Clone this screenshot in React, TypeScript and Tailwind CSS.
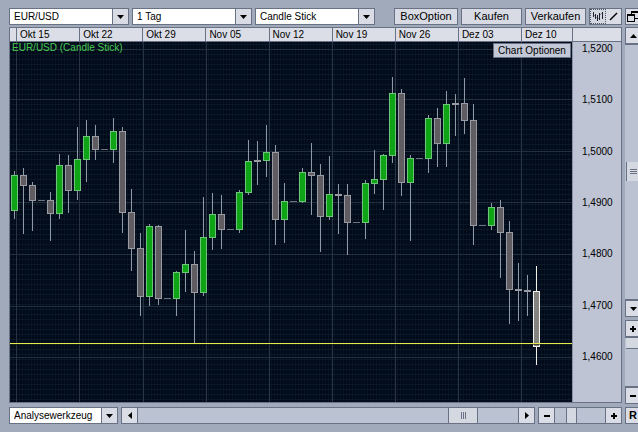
import type { ReactNode } from "react";

type Kind = "up" | "down" | "flat" | "live";
type Candle = [x: number, kind: Kind, high: number, top: number, bottom: number, low: number];

const LEFT = 10;
const TOP = 42;

const candles: Candle[] = [
  [14, "up", 171, 175, 210, 218],
  [23, "down", 168, 175, 185, 233],
  [32, "down", 182, 185, 200, 230],
  [41, "flat", 200, 200, 200, 200],
  [50, "down", 192, 200, 213, 240],
  [59, "up", 154, 165, 213, 218],
  [68, "down", 155, 165, 190, 212],
  [77, "up", 127, 159, 190, 199],
  [86, "up", 120, 136, 159, 181],
  [95, "down", 125, 136, 149, 159],
  [104, "flat", 149, 149, 149, 149],
  [113, "up", 118, 131, 149, 162],
  [122, "down", 127, 131, 212, 232],
  [131, "down", 189, 212, 248, 270],
  [140, "down", 233, 248, 296, 315],
  [149, "up", 224, 226, 296, 305],
  [158, "down", 225, 226, 298, 304],
  [167, "flat", 298, 298, 298, 298],
  [176, "up", 271, 272, 298, 315],
  [185, "up", 230, 264, 272, 291],
  [194, "down", 251, 264, 292, 343],
  [203, "up", 197, 237, 292, 295],
  [212, "up", 193, 214, 237, 249],
  [221, "down", 195, 214, 229, 248],
  [230, "flat", 229, 229, 229, 229],
  [239, "up", 190, 192, 229, 232],
  [248, "up", 140, 161, 192, 194],
  [257, "down", 141, 160, 161, 184],
  [266, "up", 125, 152, 160, 176],
  [275, "down", 145, 152, 219, 244],
  [284, "up", 183, 201, 219, 242],
  [293, "flat", 201, 201, 201, 201],
  [302, "up", 168, 172, 201, 202],
  [311, "down", 143, 172, 175, 214],
  [320, "down", 164, 175, 216, 251],
  [329, "up", 156, 194, 216, 219],
  [338, "down", 184, 194, 195, 233],
  [347, "down", 184, 195, 222, 254],
  [356, "flat", 222, 222, 222, 222],
  [365, "up", 180, 183, 222, 238],
  [374, "up", 150, 179, 183, 193],
  [383, "up", 154, 155, 179, 209],
  [392, "up", 77, 93, 155, 162],
  [401, "down", 89, 93, 182, 195],
  [410, "up", 155, 158, 182, 240],
  [419, "flat", 158, 158, 158, 158],
  [428, "up", 115, 118, 158, 172],
  [437, "down", 108, 118, 143, 166],
  [446, "up", 91, 104, 143, 166],
  [455, "down", 94, 103, 104, 135],
  [464, "down", 78, 103, 120, 133],
  [473, "down", 104, 120, 225, 244],
  [482, "flat", 225, 225, 225, 225],
  [491, "up", 203, 207, 225, 229],
  [500, "down", 200, 207, 232, 277],
  [509, "down", 221, 232, 289, 323],
  [518, "down", 263, 289, 290, 320],
  [527, "down", 275, 290, 291, 315],
  [536, "live", 266, 291, 346, 364],
];

const fills: Record<Kind, string> = { up: "#0fa416", down: "#5f5d62", flat: "#5f5d62", live: "#83837f" };
const edges: Record<Kind, string> = { up: "#6fc47c", down: "#9a9aa2", flat: "#6b737d", live: "#f2f2ea" };
const wicks: Record<Kind, string> = { up: "#8f99a6", down: "#8f99a6", flat: "#6b737d", live: "#f2f2ea" };

const weeks = ["Okt 15", "Okt 22", "Okt 29", "Nov 05", "Nov 12", "Nov 19", "Nov 26", "Dez 03"];
const prices = ["1,5200", "1,5100", "1,5000", "1,4900", "1,4800", "1,4700", "1,4600"];
const weekLines = [16, 79, 143, 206, 269, 332, 395, 458, 521];
const priceLines = [49, 99, 151, 202, 254, 306, 357];

function CandleShape({ candle }: { candle: Candle }) {
  const [cx, kind, high, top, bottom, low] = candle;
  const x = cx - LEFT;
  if (kind === "flat") return <rect x={x - 3} y={top - TOP} width={7} height={1} fill={edges.flat} />;
  return (
    <g>
      <rect x={x} y={high - TOP} width={1} height={low - high + 1} fill={wicks[kind]} />
      <rect x={x - 3} y={top - TOP} width={7} height={bottom - top + 1} fill={edges[kind]} />
      {bottom - top > 1 && (
        <rect x={x - 2} y={top - TOP + 1} width={5} height={bottom - top - 1} fill={fills[kind]} />
      )}
    </g>
  );
}

function Plot() {
  return (
    <svg
      viewBox="0 0 562 360"
      preserveAspectRatio="xMaxYMid slice"
      shapeRendering="crispEdges"
      className="block h-[360px] w-full bg-[#020a1a]"
      role="img"
      aria-label="EUR/USD Candle Stick"
    >
      <defs>
        <pattern id="fine" width="3" height="5" patternUnits="userSpaceOnUse">
          <rect width="1" height="5" fill="#061323" />
          <rect y="2" width="3" height="1" fill="#0a1828" />
        </pattern>
      </defs>
      <rect width="562" height="360" fill="url(#fine)" />
      {weekLines.map((x) => (
        <rect key={x} x={x - LEFT} y={0} width={1} height={360} fill="#283443" />
      ))}
      {priceLines.map((y) => (
        <rect key={y} x={0} y={y - TOP} width={562} height={1} fill="#222f3d" />
      ))}
      {candles.map((c) => (
        <CandleShape key={c[0]} candle={c} />
      ))}
      <rect x={0} y={302} width={562} height={1} fill="#1a1f0a" fillOpacity={0.6} />
      <rect x={0} y={301} width={562} height={1} fill="#e4ea52" />
    </svg>
  );
}

function Picker({ label, value, className }: { label: string; value: string; className: string }) {
  return (
    <div className={`relative h-[17px] border border-[#697184] bg-white ${className}`}>
      <select
        aria-label={label}
        className="block h-full w-full appearance-none bg-transparent pr-4 pl-1 text-[10px] leading-[15px] text-black outline-none"
      >
        <option>{value}</option>
      </select>
      <span className="pointer-events-none absolute inset-y-0 right-0 flex w-4 items-center justify-center border-l border-[#697184] bg-[#d9dce4]">
        <Glyph d="M0 0h7L3.5 4z" w={7} h={4} />
      </span>
    </div>
  );
}

function Glyph({ d, w, h }: { d: string; w: number; h: number }) {
  return (
    <svg width={w} height={h} viewBox={`0 0 ${w} ${h}`} fill="#000" aria-hidden="true">
      <path d={d} />
    </svg>
  );
}

const PLUS = "M2 0h2v2h2v2H4v2H2V4H0V2h2z";
const MINUS = "M0 2h6v2H0z";

function Key({ label, className = "w-[17px]", children }: { label: string; className?: string; children: ReactNode }) {
  return (
    <button
      aria-label={label}
      className={`flex h-[17px] shrink-0 items-center justify-center border border-[#697184] bg-[#dadde5] ${className}`}
    >
      {children}
    </button>
  );
}

function TextButton({ className, children }: { className: string; children: ReactNode }) {
  return (
    <button
      className={`flex h-[17px] items-center justify-center border border-[#697184] bg-[#d8dbe4] text-[11px] leading-[15px] ${className}`}
    >
      {children}
    </button>
  );
}

export default function App() {
  return (
    <div className="flex min-h-screen w-full gap-[3px] overflow-hidden bg-[#a0aabb] py-2 pl-[9px] font-['Liberation_Sans',Arial,sans-serif] text-[10px] text-black">
      <main className="flex min-w-0 flex-1 flex-col">
        <div className="mb-[2px] flex items-center gap-[3px]">
          <Picker label="Symbol" value="EUR/USD" className="w-[120px]" />
          <Picker label="Intervall" value="1 Tag" className="w-[120px]" />
          <Picker label="Darstellung" value="Candle Stick" className="w-[120px]" />
          <TextButton className="ml-auto w-16">BoxOption</TextButton>
          <TextButton className="w-[61px]">Kaufen</TextButton>
          <TextButton className="w-[61px]">Verkaufen</TextButton>
          <div className="flex h-[17px] w-[33px] border border-[#697184] bg-[#dadde5]">
            <button
              aria-label="Balken"
              className="flex w-4 items-center justify-center border border-dotted border-[#4d5568] bg-[#d3d7e0]"
            >
              <svg
                width="10"
                height="9"
                viewBox="0 0 10 9"
                shapeRendering="crispEdges"
                className="shrink-0"
                aria-hidden="true"
              >
                <path d="M0 0h1v5H0zM2 2h1v5H2zM4 3h1v6H4zM6 1h1v7H6zM9 0h1v7H9z" fill="#20242e" />
                <path d="M1 3h1v1H1zM3 5h1v1H3zM5 6h1v1H5zM7 2h1v1H7zM8 1h1v1H8z" fill="#8a90a0" />
              </svg>
            </button>
            <button aria-label="Linie" className="flex flex-1 items-center justify-center">
              <svg width="9" height="9" viewBox="0 0 9 9" aria-hidden="true">
                <path d="M1 8L8 1" stroke="#000" strokeWidth="1.5" />
              </svg>
            </button>
          </div>
        </div>

        <section className="mb-1 border border-[#697184] bg-[#bec4d3]">
          <div className="grid h-[14px] grid-cols-[7px_repeat(8,minmax(0,1fr))_51px_48px] border-b border-[#697184] bg-[#dcdee7] leading-[14px]">
            <span className="border-r border-[#697184]" />
            {weeks.map((w) => (
              <span key={w} className="border-r border-[#697184] pl-[3px]">
                {w}
              </span>
            ))}
            <span className="border-r border-[#697184] pl-[3px]">Dez 10</span>
            <span />
          </div>
          <div className="flex">
            <div className="relative min-w-0 flex-1">
              <Plot />
              <span className="absolute top-0 left-[2px] leading-[12px] text-[#45c94f]">EUR/USD (Candle Stick)</span>
              <button className="absolute top-px right-px h-[15px] w-[78px] border border-[#697184] bg-[#c3c8d6] text-[10px] leading-[13px]">
                Chart Optionen
              </button>
            </div>
            <div className="flex w-[49px] flex-col justify-between border-l border-[#8a91a2] pb-[38px] pl-[9px] leading-[14px]">
              {prices.map((p) => (
                <span key={p}>{p}</span>
              ))}
            </div>
          </div>
        </section>

        <div className="flex items-center gap-[3px]">
          <Picker label="Werkzeug" value="Analysewerkzeug" className="w-[109px]" />
          <div className="flex h-[17px] min-w-0 flex-1">
            <Key label="Zurück">
              <Glyph d="M4 0v7L0 3.5z" w={4} h={7} />
            </Key>
            <input
              type="range"
              aria-label="Zeitraum"
              min={0}
              max={1000}
              defaultValue={886}
              className="m-0 block h-[17px] min-w-0 flex-1 appearance-none border-y border-[#697184] bg-[#bbc2d1] [&::-webkit-slider-thumb]:h-[15px] [&::-webkit-slider-thumb]:w-[30px] [&::-webkit-slider-thumb]:appearance-none [&::-webkit-slider-thumb]:border-x [&::-webkit-slider-thumb]:border-[#697184] [&::-webkit-slider-thumb]:bg-[#d3d8e1] [&::-webkit-slider-thumb]:bg-[linear-gradient(90deg,#697184_1px,transparent_1px,transparent_2px,#697184_2px,#697184_3px,transparent_3px,transparent_4px,#697184_4px)] [&::-webkit-slider-thumb]:bg-[length:5px_7px] [&::-webkit-slider-thumb]:bg-center [&::-webkit-slider-thumb]:bg-no-repeat"
            />
            <Key label="Vor">
              <Glyph d="M0 0v7l4-3.5z" w={4} h={7} />
            </Key>
          </div>
          <div className="flex h-[17px] w-[84px]">
            <Key label="Zeitachse verkleinern">
              <Glyph d={MINUS} w={6} h={6} />
            </Key>
            <input
              type="range"
              aria-label="Zoom der Zeitachse"
              min={0}
              max={100}
              defaultValue={28}
              className="m-0 block h-[17px] min-w-0 flex-1 appearance-none border-y border-[#697184] bg-[#bbc2d1] [&::-webkit-slider-thumb]:h-[15px] [&::-webkit-slider-thumb]:w-[11px] [&::-webkit-slider-thumb]:appearance-none [&::-webkit-slider-thumb]:border-x [&::-webkit-slider-thumb]:border-[#697184] [&::-webkit-slider-thumb]:bg-[#d3d8e1]"
            />
            <Key label="Zeitachse vergrößern">
              <Glyph d={PLUS} w={6} h={6} />
            </Key>
          </div>
        </div>
      </main>

      <aside className="-mr-[3px] flex w-4 shrink-0 flex-col">
        <div className="mb-[2px]">
          <Key label="Neues Fenster" className="w-4">
            <svg width="12" height="11" viewBox="0 0 12 11" shapeRendering="crispEdges" className="shrink-0" aria-hidden="true">
              <path d="M4 0h8v8H4z" fill="#000" />
              <path d="M5 2h6v5H5z" fill="#dadde5" />
              <path d="M0 3h8v8H0z" fill="#000" />
              <path d="M1 5h6v5H1z" fill="#dadde5" />
            </svg>
          </Key>
        </div>
        <div className="mb-[3px] flex flex-1 flex-col">
          <Key label="Nach oben" className="w-4">
            <Glyph d="M0 4h7L3.5 0z" w={7} h={4} />
          </Key>
          <input
            type="range"
            aria-label="Preisbereich"
            min={0}
            max={1000}
            defaultValue={498}
            className="m-0 block min-h-0 w-4 flex-1 appearance-none border-x border-[#697184] bg-[#bbc2d1] [writing-mode:vertical-lr] [&::-webkit-slider-thumb]:h-[19px] [&::-webkit-slider-thumb]:w-[14px] [&::-webkit-slider-thumb]:appearance-none [&::-webkit-slider-thumb]:border-y [&::-webkit-slider-thumb]:border-[#697184] [&::-webkit-slider-thumb]:bg-[#d3d8e1] [&::-webkit-slider-thumb]:bg-[linear-gradient(#697184_1px,transparent_1px,transparent_2px,#697184_2px,#697184_3px,transparent_3px,transparent_4px,#697184_4px)] [&::-webkit-slider-thumb]:bg-[length:7px_5px] [&::-webkit-slider-thumb]:bg-center [&::-webkit-slider-thumb]:bg-no-repeat"
          />
          <Key label="Nach unten" className="w-4">
            <Glyph d="M0 0h7L3.5 4z" w={7} h={4} />
          </Key>
        </div>
        <div className="mb-[3px] flex h-[84px] flex-col">
          <Key label="Preisachse vergrößern" className="w-4">
            <Glyph d={PLUS} w={6} h={6} />
          </Key>
          <input
            type="range"
            aria-label="Zoom der Preisachse"
            min={0}
            max={100}
            defaultValue={0}
            className="m-0 block min-h-0 w-4 flex-1 appearance-none border-x border-[#697184] bg-[#bbc2d1] [writing-mode:vertical-lr] [&::-webkit-slider-thumb]:h-[11px] [&::-webkit-slider-thumb]:w-[14px] [&::-webkit-slider-thumb]:appearance-none [&::-webkit-slider-thumb]:border-b [&::-webkit-slider-thumb]:border-[#697184] [&::-webkit-slider-thumb]:bg-[#d3d8e1]"
          />
          <Key label="Preisachse verkleinern" className="w-4">
            <Glyph d={MINUS} w={6} h={6} />
          </Key>
        </div>
        <Key label="Zurücksetzen" className="w-4">
          <span className="text-[11px] leading-[15px] font-bold">R</span>
        </Key>
      </aside>
    </div>
  );
}
